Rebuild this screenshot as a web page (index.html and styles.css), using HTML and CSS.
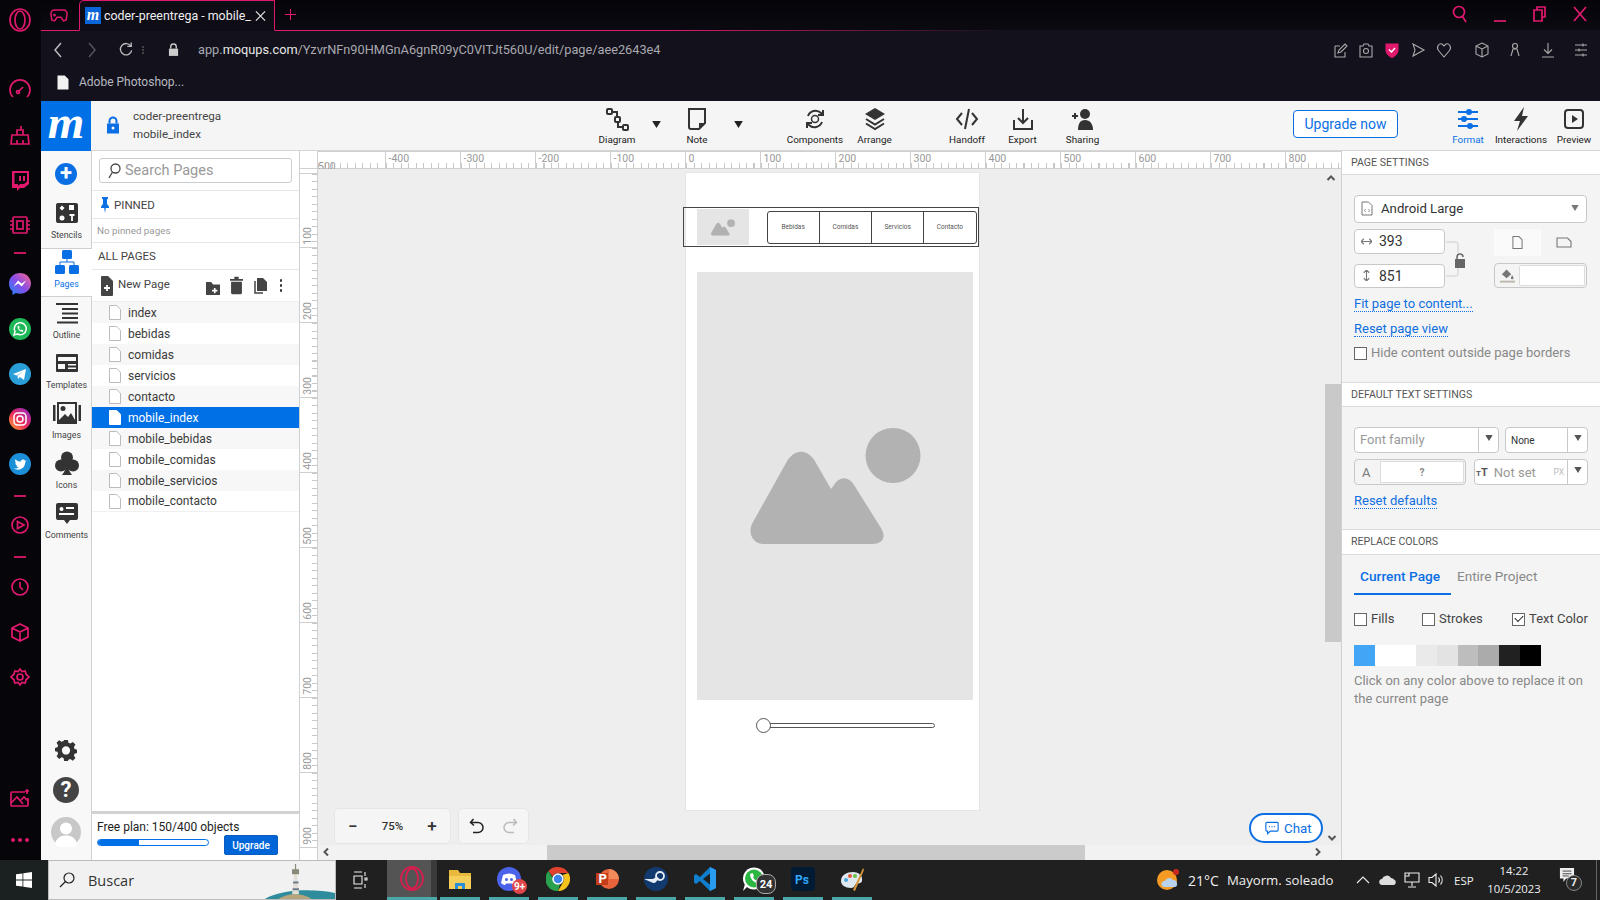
FILE: index.html
```html
<!DOCTYPE html>
<html lang="es">
<head>
<meta charset="utf-8">
<title>coder-preentrega - mobile_index</title>
<link rel="stylesheet" href="styles.css">
</head>
<body>
<svg class="sprite" width="0" height="0">
  <symbol id="file" viewBox="0 0 12 15"><path d="M.5.5h7.2l3.8 3.8v10.2H.5z"/></symbol>
  <symbol id="mount" viewBox="0 0 171 116"><circle cx="143" cy="27.500" r="27.500"/><path d="M14 116C2 116-3 104 3 94L36 35c8-15 22-15 30 0l15 26 3-4c5-9 15-9 20 0l27 43c6 10 1 16-9 16z"/></symbol>
  <symbol id="chev" viewBox="0 0 10 10"><path d="M1.500 7 5 3.500 8.500 7" fill="none" stroke="currentColor" stroke-width="2"/></symbol>
  <symbol id="caret" viewBox="0 0 10 8"><path d="M0 0h10L5 8z"/></symbol>
</svg>
<div class="screen">
  <div class="top">
    <nav class="opera-side">
      <svg class="side-icon first" viewBox="0 0 24 24"><ellipse cx="12" cy="12" rx="10" ry="11" class="p"/><ellipse cx="12" cy="12" rx="5" ry="9" class="p"/></svg>
      <div class="side-group g1">
        <svg class="side-icon" viewBox="0 0 24 24"><path class="p" d="M5 19a10 10 0 1 1 14 0"/><path class="p" d="M10 14l5-5"/><circle cx="10" cy="14" r="1.500" class="p"/></svg>
        <svg class="side-icon" viewBox="0 0 24 24"><path class="p" d="M4 12h16l1 9H3zM9 12V7h6v5M13 7V3M9 21v-4M15 21v-4"/></svg>
        <svg class="side-icon" viewBox="0 0 24 24"><path class="f" fill-rule="evenodd" d="M4 3h17v13l-5 4h-4l-3 3v-3H4zM6.500 5v11H10v2l2-2h4l3-2.500V5zM11 8h2v5h-2zM15 8h2v5h-2z"/></svg>
        <svg class="side-icon" viewBox="0 0 24 24"><rect x="5" y="4" width="14" height="16" rx="1" class="p"/><rect x="9" y="8" width="6" height="8" class="p"/><path class="p" d="M2 8h3M2 12h3M2 16h3M19 8h3M19 12h3M19 16h3"/></svg>
      </div>
      <div class="side-dash d1"></div>
      <div class="side-group g2">
        <svg class="side-icon" viewBox="0 0 24 24"><defs><linearGradient id="ms" x1="0" y1="1" x2="1" y2="0"><stop offset="0" stop-color="#1a8cff"/><stop offset=".5" stop-color="#8a4be8"/><stop offset="1" stop-color="#ff6a8a"/></linearGradient></defs><path d="M12 1C5.800 1 1 5.500 1 11.500c0 3.200 1.300 5.900 3.500 7.800V23l3.400-1.900c1.300.4 2.700.6 4.100.6 6.200 0 11-4.500 11-10.200S18.200 1 12 1z" fill="url(#ms)"/><path d="M5.500 14.500 10 8.500l3.500 3 4.800-3-4.500 6-3.500-3z" fill="#fff"/></svg>
        <svg class="side-icon" viewBox="0 0 24 24"><circle cx="12" cy="12" r="11" fill="#1fb858"/><path d="M6 18l1-3.500a6 6 0 1 1 2.500 2.500z" fill="none" stroke="#fff" stroke-width="1.500"/><path d="M9.500 9.500c0 3 2 5 5 5.500l1-1.500-2-1-.8.700c-.8-.4-1.300-1-1.700-1.800l.7-.9-1-2z" fill="#fff"/></svg>
        <svg class="side-icon" viewBox="0 0 24 24"><circle cx="12" cy="12" r="11" fill="#2a9ed8"/><path d="M5 12l13-5-2 11-4-3-2 2-.5-3.500L16 9l-7.500 4.500z" fill="#fff"/></svg>
        <svg class="side-icon" viewBox="0 0 24 24"><defs><linearGradient id="ig" x1="0" y1="1" x2="1" y2="0"><stop offset="0" stop-color="#fdb22c"/><stop offset=".45" stop-color="#ee2a5a"/><stop offset="1" stop-color="#8a2bd0"/></linearGradient></defs><circle cx="12" cy="12" r="11" fill="url(#ig)"/><rect x="6" y="6" width="12" height="12" rx="3.500" fill="none" stroke="#fff" stroke-width="1.500"/><circle cx="12" cy="12" r="3" fill="none" stroke="#fff" stroke-width="1.500"/></svg>
        <svg class="side-icon" viewBox="0 0 24 24"><circle cx="12" cy="12" r="11" fill="#1b8fd8"/><path d="M5.500 16.500c5 2.800 11.500.5 11.800-6.500l1.200-1.500-1.500.3c-.8-1.800-4-1.800-4.500 1-2 0-3.700-1-5-2.500-.8 1.500-.3 3 .8 4l-1-.3c0 1.400 1 2.400 2.300 2.700h-1.200c.4 1 1.300 1.600 2.400 1.700-1 .8-3 1.300-4.800 1.100z" fill="#fff"/></svg>
      </div>
      <div class="side-dash d2"></div>
      <svg class="side-icon play" viewBox="0 0 24 24"><circle cx="12" cy="12" r="8" class="p"/><path class="p" d="M9.500 8.500 16 12l-6.500 3.500z"/></svg>
      <div class="side-dash d3"></div>
      <div class="side-group g3">
        <svg class="side-icon" viewBox="0 0 24 24"><circle cx="12" cy="12" r="8" class="p"/><path class="p" d="M12 7v5l3 3"/></svg>
        <svg class="side-icon" viewBox="0 0 24 24"><path class="p" d="M12 4l8 4v9l-8 4-8-4V8zM4 8l8 4 8-4M12 12v9"/></svg>
        <svg class="side-icon" viewBox="0 0 24 24"><circle cx="12" cy="12" r="3" class="p"/><path class="p" d="M12 4l2 2.500 3.200-.5.8 3.200L21 12l-3 2.800-.8 3.200-3.200-.5L12 20l-2-2.500-3.200.5L6 14.800 3 12l3-2.800.8-3.200 3.200.5z"/></svg>
      </div>
      <div class="side-group bottom">
        <svg class="side-icon" viewBox="0 0 24 24"><path class="p" d="M17 6H4a1 1 0 0 0-1 1v12a1 1 0 0 0 1 1h15a1 1 0 0 0 1-1V12"/><path class="p" d="M3 17l6-6 6 7M13 14l3-3 4 4"/><path class="p" d="M19 3v5M17 5h4"/></svg>
        <div class="side-dots"><i></i><i></i><i></i></div>
      </div>
    </nav>
    <div class="main">
      <div class="tabbar">
        <svg class="gx" viewBox="0 0 20 16"><path class="p" d="M5 2h10a4 4 0 0 1 4 4l-1 7-3 1-3-4H8l-3 4-3-1-1-7a4 4 0 0 1 4-4z"/><path class="p" d="M5 6v3M3.500 7.500h3M14 6.500h.01M15.500 8h.01"/></svg>
        <div class="tab">
          <span class="favicon">m</span>
          <span class="tab-title">coder-preentrega - mobile_</span>
          <svg class="tab-x" viewBox="0 0 12 12"><path d="M1 1l10 10M11 1 1 11"/></svg>
        </div>
        <svg class="newtab" viewBox="0 0 12 12"><path d="M6 0v12M0 6h12"/></svg>
        <div class="winctl">
          <svg class="w-search" viewBox="0 0 16 18"><circle cx="7" cy="7" r="5.500" class="p"/><path class="p" d="M10.500 11.500 14 17"/></svg>
          <svg class="w-min" viewBox="0 0 14 18"><path class="p" d="M1 16h12"/></svg>
          <svg class="w-max" viewBox="0 0 14 18"><path class="p" d="M1 5h8v11H1zM4 5V2h8v10H9"/></svg>
          <svg class="w-close" viewBox="0 0 14 18"><path class="p" d="M1 2l12 14M13 2 1 16"/></svg>
        </div>
      </div>
      <div class="addressbar">
        <svg class="nav-ic back" viewBox="0 0 10 16"><path d="M8 1 2 8l6 7"/></svg>
        <svg class="nav-ic fwd" viewBox="0 0 10 16"><path d="M2 1l6 7-6 7"/></svg>
        <svg class="nav-ic reload" viewBox="0 0 16 16"><path d="M13.500 4A6.500 6.500 0 1 0 14.500 9M14 0v4.500H9.500"/></svg>
        <span class="addr-dots"></span>
        <svg class="addr-lock" viewBox="0 0 12 14"><path d="M1 6h10v8H1z"/><path class="lockbow" d="M3 6V4a3 3 0 0 1 6 0v2"/></svg>
        <div class="url"><span class="url-dim">app.</span><span class="url-host">moqups.com</span><span class="url-dim">/YzvrNFn90HMGnA6gnR09yC0VITJt560U/edit/page/aee2643e4</span></div>
        <div class="addr-right">
          <svg class="addr-ic" viewBox="0 0 16 16"><path d="M3 4h5M3 4v11h10v-5M6 11l1-3 6-6 2 2-6 6z"/></svg>
          <svg class="addr-ic" viewBox="0 0 16 16"><path d="M2 4h3l1-2h4l1 2h3v11H2z"/><circle cx="8" cy="9" r="2.500"/></svg>
          <svg class="addr-ic" viewBox="0 0 16 16"><path class="shield" d="M2 2h12v6c0 4-3 6-6 7.500C5 14 2 12 2 8z"/><path class="tick" d="M5 7.500l2.500 2.500L11 6"/></svg>
          <svg class="addr-ic" viewBox="0 0 16 16"><path d="M3 2l11 6-11 6 2-6z"/></svg>
          <svg class="addr-ic" viewBox="0 0 16 16"><path d="M8 15 2.500 8.500C0 5 3 1 6 2l2 2 2-2c3-1 6 3 3.500 6.500z"/></svg>
          <svg class="addr-ic gap" viewBox="0 0 16 16"><path d="M8 1l6 3v8l-6 3-6-3V4zM2 4l6 3 6-3M8 7v8"/></svg>
          <svg class="addr-ic far" viewBox="0 0 16 16"><circle cx="8" cy="4" r="2.500"/><path d="M4 14l2-7h4l2 7"/></svg>
          <svg class="addr-ic far" viewBox="0 0 16 16"><path d="M8 1v10M4 7.500 8 11.500l4-4M2 15h12"/></svg>
          <svg class="addr-ic far" viewBox="0 0 16 16"><path d="M2 3h12M2 8h12M2 13h12M10 1.500v3M6 6.500v3M10 11.500v3"/></svg>
        </div>
      </div>
      <div class="bookmarks">
        <svg class="bm-ic" viewBox="0 0 12 15"><use href="#file"/></svg>
        <span class="bm-text">Adobe Photoshop...</span>
      </div>
      <div class="app">
        <header class="toolbar">
          <div class="logo">m</div>
          <svg class="proj-lock" viewBox="0 0 14 17"><path d="M1 7h12v10H1z"/><path class="bow" d="M3.500 7V4.500a3.500 3.500 0 0 1 7 0V7"/><circle class="hole" cx="7" cy="11.500" r="1.500"/></svg>
          <div class="proj"><div>coder-preentrega</div><div>mobile_index</div></div>
          <div class="tools t-one">
            <div class="tool w-diagram"><svg viewBox="0 0 24 24"><rect class="thick" x="2" y="2" width="5" height="5" rx="1"/><rect class="thick" x="10" y="10" width="5" height="5" rx="1"/><rect class="thick" x="18" y="18" width="5" height="5" rx="1"/><path class="thick" d="M7 5h5v5M13 15v5h5"/></svg><span>Diagram</span></div>
            <svg class="tool-caret c1" viewBox="0 0 10 8"><use href="#caret"/></svg>
            <div class="tool w-note"><svg viewBox="0 0 24 24"><path class="thick" d="M4 2h16v14l-6 6H6a2 2 0 0 1-2-2z"/><path class="solid" d="M14 22v-6h6z"/></svg><span>Note</span></div>
            <svg class="tool-caret c2" viewBox="0 0 10 8"><use href="#caret"/></svg>
          </div>
          <div class="tools t-two">
            <div class="tool w-comp"><svg viewBox="0 0 24 24"><circle cx="12" cy="12" r="3.500"/><path class="thick" d="M5 9a8 8 0 0 1 13-3l2 2M19 15a8 8 0 0 1-13 3l-2-2M20 3v5h-5M4 21v-5h5"/></svg><span>Components</span></div>
            <div class="tool w-arr"><svg viewBox="0 0 24 24"><path class="solid" d="M12 1l10 6-10 6L2 7z"/><path class="thick" d="M3 12l9 5.500L21 12M3 16.500l9 5.500 9-5.500"/></svg><span>Arrange</span></div>
          </div>
          <div class="tools t-three">
            <div class="tool w-hand"><svg viewBox="0 0 24 24"><path class="thick" d="M7 6l-5 6 5 6M17 6l5 6-5 6M14 2l-4 20"/></svg><span>Handoff</span></div>
            <div class="tool w-exp"><svg viewBox="0 0 24 24"><path class="thick" d="M12 2v14M7 11l5 5 5-5M3 13v9h18v-9"/></svg><span>Export</span></div>
            <div class="tool w-share"><svg viewBox="0 0 24 24"><circle class="solid" cx="14" cy="7" r="5"/><path class="solid" d="M7 23c0-6 2-10 7-10s8 4 8 10z"/><path class="thick" d="M1 9h6M4 6v6"/></svg><span>Sharing</span></div>
          </div>
          <button class="upgrade-now">Upgrade now</button>
          <div class="tools t-four">
            <div class="tool w-fmt active"><svg viewBox="0 0 24 24"><path class="thick" d="M2 5h20M2 12h20M2 19h20"/><circle class="bluefill" cx="13" cy="5" r="3"/><circle class="bluefill" cx="8" cy="12" r="3"/><circle class="bluefill" cx="14" cy="19" r="3"/></svg><span>Format</span></div>
            <div class="tool w-int"><svg viewBox="0 0 24 24"><path class="solid" d="M15 0 5 14h6l-3 10L19 9h-6z"/></svg><span>Interactions</span></div>
            <div class="tool w-prev"><svg viewBox="0 0 24 24"><rect class="thick" x="3" y="3" width="18" height="18" rx="3"/><path class="solid" d="M10 8l6 4-6 4z"/></svg><span>Preview</span></div>
          </div>
        </header>
        <div class="work">
          <aside class="rail">
            <div class="rail-top"><div class="plus">+</div></div>
            <div class="rail-item"><svg viewBox="0 0 24 24"><rect class="solid" x="1" y="2" width="22" height="20" rx="2"/><path class="white" d="M7 4.500 9.500 7 7 9.500 4.500 7zM14 4h5v5h-5z"/><circle class="white" cx="7" cy="17" r="2.500"/><path class="wline" d="M14.500 14h5M17 14v6"/></svg><span>Stencils</span></div>
            <div class="rail-item on"><svg viewBox="0 0 24 24"><rect class="bluefill" x="7" y="0" width="10" height="9" rx="1.500"/><rect class="bluefill" x="0" y="15" width="10" height="9" rx="1.500"/><rect class="bluefill" x="14" y="15" width="10" height="9" rx="1.500"/><path class="bluelin" d="M5 15v-3h14v3M12 9v3"/></svg><span>Pages</span></div>
            <div class="rail-item"><svg viewBox="0 0 24 24"><path class="thick" d="M1 3h22M7 8h16M7 12.500h16M7 17h16M2 21.500h21"/></svg><span>Outline</span></div>
            <div class="rail-item"><svg viewBox="0 0 24 24"><path class="solid" fill-rule="evenodd" d="M2 3h20a1 1 0 0 1 1 1v16a1 1 0 0 1-1 1H2a1 1 0 0 1-1-1V4a1 1 0 0 1 1-1zM3 6v4h18V6zM3 13v5h7v-5zM13 13v1.500h8V13zM13 16.500V18h8v-1.500z"/></svg><span>Templates</span></div>
            <div class="rail-item wide"><svg viewBox="0 0 28 24"><path class="solid" fill-rule="evenodd" d="M4 1h20v22H4zM6 3v16h16V3zM0 4h2.500v16H0zM25.500 4H28v16h-2.500z"/><circle class="solid" cx="10" cy="7.500" r="2.500"/><path class="solid" d="M6 19l6-6 3 3 3-4 4 7z"/></svg><span>Images</span></div>
            <div class="rail-item"><svg viewBox="0 0 24 24"><circle class="solid" cx="12" cy="6.500" r="6"/><circle class="solid" cx="6" cy="14.500" r="6"/><circle class="solid" cx="18" cy="14.500" r="6"/><path class="solid" d="M11 12h2c0 5 1 8 4 12H7c3-4 4-7 4-12z"/></svg><span>Icons</span></div>
            <div class="rail-item"><svg viewBox="0 0 24 24"><path class="solid" d="M3 2h18a2 2 0 0 1 2 2v13a2 2 0 0 1-2 2h-6l-3 4-3-4H3a2 2 0 0 1-2-2V4a2 2 0 0 1 2-2z"/><circle class="white" cx="6.500" cy="8" r="2"/><path class="wline" d="M11 7h8M4 13h15"/></svg><span>Comments</span></div>
            <div class="rail-bottom">
              <svg class="gear" viewBox="0 0 24 24"><path class="solid" fill-rule="evenodd" d="M10 1h4l.7 3.200 2 .8 2.800-1.700 2.800 2.800L20.600 9l.8 2 2.600.7v3.600l-2.600.7-.8 2 1.700 2.800-2.800 2.800-2.800-1.700-2 .8L14 24h-4l-.7-3.200-2-.8-2.800 1.700-2.800-2.800L3.400 16l-.8-2L0 13.300V9.700L2.600 9l.8-2L1.700 4.100l2.800-2.800L7.300 3l2-.8zM12 8a4.500 4.500 0 1 0 0 9 4.500 4.500 0 0 0 0-9z"/></svg>
              <div class="help">?</div>
              <svg class="avatar" viewBox="0 0 30 30"><circle cx="15" cy="15" r="15" class="av-bg"/><circle cx="15" cy="11.500" r="6" class="white"/><path class="white" d="M4 27c1-6 6-8.500 11-8.500S25 21 26 27a15 15 0 0 1-22 0z"/></svg>
            </div>
          </aside>
          <section class="pages">
            <div class="search-wrap">
              <div class="search">
                <svg viewBox="0 0 14 16"><circle cx="8.500" cy="5.500" r="4.500"/><path d="M5.500 9 2 15"/></svg>
                <span>Search Pages</span>
              </div>
            </div>
            <div class="pg-head h-pin"><svg viewBox="0 0 10 16"><path d="M2 0h6v1.500L7 2.500V7l2 2.500V11H5.800L5 16l-.8-5H1V9.500L3 7V2.500L2 1.500z"/></svg>PINNED</div>
            <div class="pg-empty">No pinned pages</div>
            <div class="pg-head h-all">ALL PAGES</div>
            <div class="pg-actions">
              <svg class="np-ic" viewBox="0 0 13 20"><path d="M1 1a1 1 0 0 1 1-1h6l5 5v14a1 1 0 0 1-1 1H2a1 1 0 0 1-1-1z"/><path class="wline" d="M7 9v6M4 12h6"/></svg>
              <span class="np-text">New Page</span>
              <svg class="act a-folder" viewBox="0 0 16 16"><path d="M0 1h6l2 3h8v12H0z"/><path class="wline" d="M10 8v6M7 11h6"/></svg>
              <svg class="act a-trash" viewBox="0 0 12 16"><path d="M0 2h12v1.500H0zM4 0h4v2H4zM1 4.500h10V15a1 1 0 0 1-1 1H2a1 1 0 0 1-1-1z"/></svg>
              <svg class="act a-copy" viewBox="0 0 14 16"><path d="M4 0h6l4 4v9H4z"/><path class="copyline" d="M2 3v12h8"/></svg>
              <span class="kebab"><i></i><i></i><i></i></span>
            </div>
            <ul class="pg-list">
              <li><svg viewBox="0 0 12 15"><use href="#file"/></svg>index</li>
              <li><svg viewBox="0 0 12 15"><use href="#file"/></svg>bebidas</li>
              <li><svg viewBox="0 0 12 15"><use href="#file"/></svg>comidas</li>
              <li><svg viewBox="0 0 12 15"><use href="#file"/></svg>servicios</li>
              <li><svg viewBox="0 0 12 15"><use href="#file"/></svg>contacto</li>
              <li class="sel"><svg viewBox="0 0 12 15"><use href="#file"/></svg>mobile_index</li>
              <li><svg viewBox="0 0 12 15"><use href="#file"/></svg>mobile_bebidas</li>
              <li><svg viewBox="0 0 12 15"><use href="#file"/></svg>mobile_comidas</li>
              <li><svg viewBox="0 0 12 15"><use href="#file"/></svg>mobile_servicios</li>
              <li><svg viewBox="0 0 12 15"><use href="#file"/></svg>mobile_contacto</li>
            </ul>
            <div class="plan">
              <div class="plan-text">Free plan: 150/400 objects</div>
              <div class="plan-row">
                <div class="plan-bar"><div class="plan-fill" style="width:37.500%"></div></div>
                <button class="plan-btn">Upgrade</button>
              </div>
            </div>
          </section>
          <section class="center">
            <div class="corner"></div>
            <div class="hruler">
              <div class="hcell first">500</div><div class="hcell">-400</div><div class="hcell">-300</div><div class="hcell">-200</div><div class="hcell">-100</div><div class="hcell">0</div><div class="hcell">100</div><div class="hcell">200</div><div class="hcell">300</div><div class="hcell">400</div><div class="hcell">500</div><div class="hcell">600</div><div class="hcell">700</div><div class="hcell">800</div>
            </div>
            <div class="vruler">
              <div class="vcell"><span>100</span></div><div class="vcell"><span>200</span></div><div class="vcell"><span>300</span></div><div class="vcell"><span>400</span></div><div class="vcell"><span>500</span></div><div class="vcell"><span>600</span></div><div class="vcell"><span>700</span></div><div class="vcell"><span>800</span></div><div class="vcell"><span>900</span></div>
            </div>
            <div class="canvas">
              <div class="artboard"></div>
              <div class="w-header">
                <div class="w-thumb"><svg viewBox="0 0 171 116"><use href="#mount"/></svg></div>
                <div class="w-nav"><div>Bebidas</div><div>Comidas</div><div>Servicios</div><div>Contacto</div></div>
              </div>
              <div class="w-image"><svg viewBox="0 0 171 116"><use href="#mount"/></svg></div>
              <div class="w-slider"><div class="w-thumbdot"></div></div>
              <div class="zoombox"><span class="zb">−</span><span class="zv">75%</span><span class="zb">+</span></div>
              <div class="undobox">
                <svg viewBox="0 0 16 16"><path d="M4.500 1 1.500 4.500l3.500 3M2 4.500h7a4.500 4.500 0 0 1 0 10H4"/></svg>
                <svg class="redo" viewBox="0 0 16 16"><path d="M11.500 1l3 3.500-3.500 3M14 4.500H7a4.500 4.500 0 0 0 0 10h5"/></svg>
              </div>
              <div class="chat"><svg viewBox="0 0 16 16"><path d="M2 1.500h12a1 1 0 0 1 1 1v8a1 1 0 0 1-1 1H6l-3 3v-3H2a1 1 0 0 1-1-1v-8a1 1 0 0 1 1-1z"/><path class="chatdots" d="M4.500 6.500h1M7.500 6.500h1M10.500 6.500h1"/></svg>Chat</div>
              <div class="vscroll"><div class="vthumb"></div></div>
              <div class="hscroll"><div class="hthumb"></div></div>
              <svg class="chev c-up" viewBox="0 0 10 10"><use href="#chev"/></svg>
              <svg class="chev c-down" viewBox="0 0 10 10"><use href="#chev"/></svg>
              <svg class="chev c-left" viewBox="0 0 10 10"><use href="#chev"/></svg>
              <svg class="chev c-right" viewBox="0 0 10 10"><use href="#chev"/></svg>
            </div>
          </section>
          <aside class="props">
            <div class="p-head first-head">PAGE SETTINGS</div>
            <div class="p-body b-page">
              <div class="field f-select">
                <svg class="ds-ic" viewBox="0 0 12 15"><path d="M1 1h6.500L11 4.500V14H1z"/><path class="mini" d="M4.500 8 3.500 9.500l1 1.500M7.500 8l1 1.500-1 1.500"/></svg>
                <span>Android Large</span>
                <svg class="tri" viewBox="0 0 10 8"><use href="#caret"/></svg>
              </div>
              <div class="dims">
                <div class="dim-col">
                  <div class="field f-num"><svg viewBox="0 0 12 8"><path d="M0 4h12M3 1 0 4l3 3M9 1l3 3-3 3"/></svg><span>393</span></div>
                  <div class="field f-num"><svg viewBox="0 0 12 12"><path d="M6 0v12M3 3l3-3 3 3M3 9l3 3 3-3"/></svg><span>851</span></div>
                </div>
                <svg class="dim-lock" viewBox="0 0 49 59"><path class="br" d="M1 13h10a2 2 0 0 1 2 2v9M1 47h10a2 2 0 0 0 2-2v-6"/><path class="lk" d="M10 30h10v9H10z"/><path class="br2" d="M12 30v-2a3 3 0 0 1 6 0"/></svg>
                <div class="dim-right">
                  <div class="orient">
                    <div class="o-btn on"><svg viewBox="0 0 12 15"><path d="M1 1h6.500L11 4.500V14H1z"/></svg></div>
                    <div class="o-btn"><svg class="land" viewBox="0 0 16 11"><path d="M1 1h10.500L15 4.500V10H1z"/></svg></div>
                  </div>
                  <div class="fill-box">
                    <svg viewBox="0 0 16 16"><path d="M7 1l5 5-5 4.500L2 6z"/><path d="M13 7l1.500 3a1.500 1.500 0 0 1-3 0z"/><rect class="barfill" x="0" y="13" width="16" height="2"/></svg>
                    <div class="fill-swatch"></div>
                  </div>
                </div>
              </div>
              <a class="lnk l1">Fit page to content...</a>
              <a class="lnk l2">Reset page view</a>
              <label class="chk c-hide"><i class="cb"></i>Hide content outside page borders</label>
            </div>
            <div class="p-head">DEFAULT TEXT SETTINGS</div>
            <div class="p-body b-text">
              <div class="txt-row">
                <div class="field f-font"><span class="ph">Font family</span><b class="drop"><svg viewBox="0 0 10 8"><use href="#caret"/></svg></b></div>
                <div class="field f-none"><span class="none-t">None</span><b class="drop"><svg viewBox="0 0 10 8"><use href="#caret"/></svg></b></div>
              </div>
              <div class="txt-row">
                <div class="field f-a"><span class="a-l">A</span><div class="a-sw">?</div></div>
                <div class="field f-set"><span class="tt"><small>T</small>T</span><span class="ph">Not set</span><em>PX</em><b class="drop"><svg viewBox="0 0 10 8"><use href="#caret"/></svg></b></div>
              </div>
              <a class="lnk l3">Reset defaults</a>
            </div>
            <div class="p-head h-colors">REPLACE COLORS</div>
            <div class="p-body b-colors">
              <div class="ctabs"><span class="ctab on">Current Page</span><span class="ctab">Entire Project</span></div>
              <div class="chk-row">
                <label class="chk c-fills"><i class="cb"></i>Fills</label>
                <label class="chk c-strokes"><i class="cb"></i>Strokes</label>
                <label class="chk"><i class="cb ck"></i>Text Color</label>
              </div>
              <div class="swatches"><i class="s1"></i><i class="s2"></i><i class="s3"></i><i class="s4"></i><i class="s5"></i><i class="s6"></i><i class="s7"></i><i class="s8"></i></div>
              <p class="hint">Click on any color above to replace it on the current page</p>
            </div>
          </aside>
        </div>
      </div>
    </div>
  </div>
  <footer class="taskbar">
    <div class="start"><svg viewBox="0 0 16 16"><path d="M0 2.300 6.500 1.400v6.200H0zM7.300 1.300 16 0v7.600H7.300zM0 8.400h6.500v6.200L0 13.700zM7.300 8.400H16V16l-8.700-1.300z"/></svg></div>
    <div class="tsearch">
      <svg viewBox="0 0 16 16"><circle cx="10" cy="6" r="5"/><path d="M6.500 9.500 1 15"/></svg>
      <span>Buscar</span>
      <svg class="light" viewBox="0 0 80 40"><path d="M4 40c10-8 30-11 46-11 12 0 22 1 30 3v8z" fill="#2f8c9c"/><path d="M18 40c6-5 12-7 20-7s15 3 20 7z" fill="#b8a47c"/><path d="M35 33l2-21h3l2 21z" fill="#e2dfd6"/><path d="M35.500 12h6v-4h-6zM38.500 8V2" fill="#8a8a78" stroke="#8a8a78"/><path d="M36 20h5.500v2H36zM35.500 27H42v2h-6.500z" fill="#6d7a8a"/></svg>
    </div>
    <div class="taskview"><svg viewBox="0 0 18 18"><path d="M3 1h8M3 5h8v8H3zM3 17h8M14 1v4M14 7h2v2h-2zM14 13v4"/></svg></div>
    <div class="task-opera"><svg viewBox="0 0 24 24"><ellipse cx="12" cy="12" rx="11" ry="11.500"/><ellipse cx="12" cy="12" rx="6" ry="10"/></svg></div>
    <div class="apps">
      <div class="app-t"><svg viewBox="0 0 24 24"><path d="M1 3h9l2 3h11v16H1z" fill="#e8b93a"/><path d="M1 9h22v13H1z" fill="#f5cf5a"/><path d="M7 16h10v6h-3v-3h-4v3H7z" fill="#2a8fd8"/></svg></div>
      <div class="app-t badge-wrap"><svg viewBox="0 0 24 24"><circle cx="12" cy="12" r="12" fill="#4a63e8"/><path d="M6 8c4-2 8-2 12 0l2 8c-2 1.500-3 2-4 2l-1-1.500h-6L8 18c-1 0-2-.5-4-2z" fill="#fff"/><circle cx="9.500" cy="12.500" r="1.500" fill="#4a63e8"/><circle cx="14.500" cy="12.500" r="1.500" fill="#4a63e8"/></svg><span class="badge red">9+</span></div>
      <div class="app-t"><svg viewBox="0 0 24 24"><path d="M12 0a12 12 0 0 1 10.400 6H12a6 6 0 0 0-5.500 3.500L2.500 4A12 12 0 0 1 12 0z" fill="#e3412f"/><path d="M22.400 6A12 12 0 0 1 12 24l5.200-9A6 6 0 0 0 16.500 8z" fill="#f6c21c"/><path d="M12 24A12 12 0 0 1 2.500 4l5 8.500a6 6 0 0 0 6.500 5.200z" fill="#2aa14f"/><circle cx="12" cy="12" r="5" fill="#3d83ee" stroke="#fff" stroke-width="1.500"/></svg></div>
      <div class="app-t"><svg viewBox="0 0 24 24"><circle cx="14" cy="12" r="10" fill="#e8643c"/><path d="M14 2a10 10 0 0 1 10 10H14z" fill="#f28b5c"/><path d="M1 6h12v12H1z" fill="#c43e1c"/><text x="3.500" y="16" class="ppt-t">P</text></svg></div>
      <div class="app-t"><svg viewBox="0 0 24 24"><circle cx="12" cy="12" r="12" fill="#123a6e"/><circle cx="16" cy="9" r="4" fill="none" stroke="#e8eef6" stroke-width="1.800"/><path d="M0 12l8 3.500a3.500 3.500 0 0 0 5-2l3-1-3-3-4 2.500z" fill="#e8eef6"/></svg></div>
      <div class="app-t"><svg viewBox="0 0 24 24"><path d="M17 0l6 3v18l-6 3L7 14l-4 3-2-1.500V8.500L3 7l4 3z" fill="#0f7fd0"/><path d="M17 6.500v11L10 12z" fill="#1f1f1f"/><path d="M17 0l6 3v18l-6 3z" fill="#2a9cf0"/></svg></div>
      <div class="app-t badge-wrap"><svg viewBox="0 0 24 24"><circle cx="12" cy="11.500" r="11" fill="#fff"/><path d="M1 24l2-7h5z" fill="#fff"/><circle cx="12" cy="11.500" r="9" fill="#2bb741"/><path d="M8 7c0 5 4 9 9 9.500l1.500-2.500-3-1.500-1 1c-1.500-.5-3-2-3.500-3.500l1-1-1.500-3z" fill="#fff"/></svg><span class="badge dark">24</span></div>
      <div class="app-t"><svg viewBox="0 0 24 24"><rect width="24" height="24" rx="4" fill="#001b33"/><text x="4" y="17" class="ps-t">Ps</text></svg></div>
      <div class="app-t"><svg viewBox="0 0 24 24"><path d="M1 14C1 8 7 5 13 5s10 4 9 9c-1 3-4 2-6 3-2 1-1 4-5 4-6 0-10-3-10-7z" fill="#dfe8ef"/><circle cx="6" cy="13" r="2" fill="#4aa3e0"/><circle cx="10" cy="9" r="2" fill="#e05a3a"/><circle cx="15" cy="9" r="2" fill="#6cbf4a"/><path d="M23 1l1 2-9 21-2-1z" fill="#d8963a"/></svg></div>
    </div>
    <div class="tray">
      <svg class="weather" viewBox="0 0 22 22"><circle cx="10" cy="11" r="10" fill="#f59a23"/><circle cx="19" cy="3" r="3" fill="#c8281e"/><path d="M7 18a3 3 0 0 1 1-6 4.500 4.500 0 0 1 8-1 3.500 3.500 0 0 1 4 3.500 3 3 0 0 1-2 3.500z" fill="#b9d3ee"/></svg>
      <span class="temp">21°C</span>
      <span class="cond">Mayorm. soleado</span>
      <svg class="tray-ic t-up" viewBox="0 0 14 14"><path d="M1 10l6-6 6 6"/></svg>
      <svg class="tray-ic t-cloud" viewBox="0 0 18 12"><path class="cloud" d="M3.500 11a3 3 0 0 1-.5-6 5 5 0 0 1 9-1 3.500 3.500 0 0 1 3 1.500A3 3 0 0 1 15 11z"/></svg>
      <svg class="tray-ic t-net" viewBox="0 0 16 16"><path d="M1 1h14v9H1zM8 10v4M4 15h8M1 4h4V1"/></svg>
      <svg class="tray-ic t-vol" viewBox="0 0 16 16"><path d="M1 5.500h3L8 2v12l-4-3.500H1zM10.500 5.500a4 4 0 0 1 0 5M12.500 3.500a7 7 0 0 1 0 9"/></svg>
      <span class="esp">ESP</span>
      <div class="clock"><div>14:22</div><div>10/5/2023</div></div>
      <div class="notif"><svg viewBox="0 0 18 17"><path d="M1 0h16v12H8l-3 4v-4H1z"/><path class="nl" d="M4 3.500h10M4 6.500h10M4 9h7"/></svg><span>7</span></div>
      <div class="showdesk"></div>
    </div>
  </footer>
</div>
</body>
</html>
```
FILE: styles.css
```css
*{box-sizing:border-box}
html,body{margin:0;padding:0;height:900px;overflow:hidden}
body{font-family:Roboto,"Liberation Sans",sans-serif;color:#333;background:#000}
.sprite{position:absolute}
svg{display:block;flex:none}
.screen{display:grid;grid-template-rows:860px 40px;width:1600px;height:900px}
.top{display:flex;min-height:0}

/* Opera sidebar */
.opera-side{width:41px;flex:none;background:#060509;display:flex;flex-direction:column;align-items:center;padding:0 2px 8px 0}
.side-icon{width:24px;height:24px}
.p{fill:none;stroke:#e0196e;stroke-width:1.700}
.f{fill:#e0196e}
.side-group{display:flex;flex-direction:column;align-items:center;gap:21px}
.first{margin-top:8px}
.g1{margin-top:46px}
.d1{margin-top:15px}
.g2{margin-top:18px}
.d2{margin-top:19px}
.play{margin-top:16px}
.d3{margin-top:19px}
.g3{margin-top:17px}
.bottom{margin-top:auto;gap:18px}
.side-dash{width:12px;height:2px;background:#c8155f;flex:none}
.side-dots{display:flex;gap:3px;height:24px;align-items:center}
.side-dots i{width:4px;height:4px;border-radius:50%;background:#e0196e}

/* Browser chrome */
.main{flex:1;min-width:0;display:flex;flex-direction:column}
.tabbar{height:31px;flex:none;display:flex;align-items:flex-start;background:linear-gradient(#050409,#0b0a11);border-bottom:1px solid;border-image:linear-gradient(90deg,#e0196e 0,#e0196e 40%,#12111c 62%) 1}
.gx{width:18px;height:15px;margin:8px 0 0 9px}
.tab{width:196px;height:31px;margin-left:11px;display:flex;align-items:center;background:#0e0d16;border:1px solid #e0196e;border-bottom-color:#0e0d16;border-radius:5px 0 0 0;padding:0 0 0 5px;position:relative;z-index:1}
.favicon{width:16px;height:17px;background:#0a66d8;color:#fff;font:italic bold 16px/15px "Liberation Serif",serif;text-align:center;flex:none}
.tab-title{margin-left:3px;color:#eee;font-size:12.400px;white-space:nowrap;width:146px;flex:none}
.tab-x{width:11px;height:12px;margin-left:5px;fill:none;stroke:#e4e4e4;stroke-width:1.300}
.newtab{width:11px;height:11px;margin:9px 0 0 10px;stroke:#e0196e;stroke-width:1.200;fill:none}
.winctl{margin-left:auto;display:flex;align-items:flex-start;padding-top:5px}
.w-search{width:16px;height:18px;margin-right:25px}
.w-min{width:14px;height:18px;margin-right:26px}
.w-max{width:14px;height:18px;margin-right:26px}
.w-close{width:14px;height:18px;margin-right:13px}
.addressbar{height:37px;flex:none;background:#12111c;display:flex;align-items:center}
.nav-ic{fill:none;stroke:#bbb;stroke-width:1.500}
.back{width:10px;height:16px;margin-left:12px}
.fwd{width:10px;height:16px;margin-left:24px;stroke:#55545e}
.reload{width:14px;height:15px;margin-left:22px}
.addr-dots{width:2px;height:8px;margin-left:9px;background:repeating-linear-gradient(#444 0 2px,transparent 2px 3px)}
.addr-lock{width:11px;height:13px;margin-left:24px;fill:#ccc}
.lockbow{fill:none;stroke:#ccc;stroke-width:1.500}
.url{margin-left:19px;font-size:12.750px;white-space:nowrap;color:#a9a9af}
.url-host{color:#e8e8e8}
.addr-right{margin-left:auto;display:flex;align-items:center;gap:10px;padding-right:11px}
.addr-ic{width:16px;height:16px;fill:none;stroke:#aaa;stroke-width:1.100}
.addr-ic.gap{margin-left:12px}
.addr-ic.far{margin-left:7px}
.shield{fill:#e0196e;stroke:#e0196e}
.tick{stroke:#fff;stroke-width:1.500}
.bookmarks{height:33px;flex:none;background:#12111c;display:flex;align-items:flex-start;padding:7px 0 0 16px}
.bm-ic{width:12px;height:15px;fill:#f2f2f2}
.bm-text{margin-left:10px;color:#b9b9c0;font-size:12px;line-height:15px}

/* App */
.app{flex:1;min-height:0;display:flex;flex-direction:column;background:#fff}
.toolbar{height:50px;flex:none;background:#f5f5f5;border-bottom:1px solid #d5d5d5;display:flex;align-items:flex-start}
.logo{width:50px;height:50px;background:#0070e6;color:#fff;font:italic bold 47px/42px "Liberation Serif",serif;text-align:center;flex:none}
.proj-lock{width:14px;height:18px;margin:15px 0 0 15px;fill:#0a6fe4}
.bow{fill:none;stroke:#0a6fe4;stroke-width:2}
.hole{fill:#fff}
.proj{margin-left:13px;font-size:11.600px;line-height:18px;color:#444;padding-top:6px;width:456px;flex:none}
.tools{display:flex;align-items:flex-start}
.t-one{width:197.500px;flex:none}
.t-two{width:157.500px;flex:none;gap:7px}
.t-three{width:161px;flex:none}
.tool{display:flex;flex-direction:column;align-items:center;flex:none;font-size:9.900px;color:#222;padding-top:6px;white-space:nowrap}
.tool svg{width:24px;height:24px;fill:none;stroke:#333;stroke-width:1.500}
.tool span{display:block;margin-top:2px;line-height:14px}
.thick{fill:none;stroke:#333;stroke-width:2}
.solid{fill:#333;stroke:none}
.white{fill:#fff;stroke:none}
.wline{fill:none;stroke:#fff;stroke-width:1.800}
.bluefill{fill:#0a6fe4;stroke:none}
.bluelin{fill:none;stroke:#0a6fe4;stroke-width:1}
.tool-caret{width:9px;height:7px;fill:#222;margin-top:20px}
.c1{margin-left:9px;margin-right:3px}
.c2{margin-left:18px}
.w-diagram{width:52px;margin-left:2px}
.w-note{width:38px;margin-left:14px}
.w-comp{width:57px}
.w-arr{width:48px}
.w-hand{width:46px}
.w-exp{width:40px;margin-left:12.500px}
.w-share{width:44px;margin-left:18px}
.upgrade-now{width:105px;height:28px;margin:9px 0 0 188px;background:#fff;border:1px solid #0a6fe4;border-radius:4px;color:#0a6fe4;font:14px Roboto,sans-serif;padding:0;flex:none}
.t-four{margin-left:50px}
.w-fmt{width:40px}
.w-int{width:56px;margin-left:5px}
.w-prev{width:40px;margin-left:5px}
.active{color:#0a6fe4}
.active .thick{stroke:#0a6fe4}

.work{flex:1;min-height:0;display:flex}

/* Rail */
.rail{width:51px;flex:none;background:#f8f8f8;border-right:1px solid #d0d0d0;display:flex;flex-direction:column;position:relative}
.rail-top{height:47px;flex:none;padding:12px 0 0 14px}
.plus{width:22px;height:22px;border-radius:50%;background:#0a6fe4;color:#fff;font:700 22px/20px Roboto,sans-serif;text-align:center}
.rail-item{height:50px;flex:none;display:flex;flex-direction:column;align-items:center;font-size:8.800px;color:#444;padding-top:2px;margin-right:-1px}
.rail-item svg{width:24px;height:24px;margin-top:1px}
.rail-item span{display:block;margin-top:4px;line-height:13px}
.rail-item.wide svg{width:28px}
.rail-item.on{background:#fff;color:#0a6fe4;border-top:1px solid #d0d0d0;border-bottom:1px solid #d0d0d0;height:49px;padding-top:0;margin-bottom:1px}
.rail-bottom{margin-top:auto;display:flex;flex-direction:column;align-items:center;padding-bottom:13px}
.gear{width:22px;height:22px}
.help{width:26px;height:26px;margin-top:16px;border-radius:50%;background:#444;color:#fff;font:700 22px/26px Roboto,sans-serif;text-align:center}
.avatar{width:30px;height:30px;margin-top:14px}
.av-bg{fill:#c8c8c8}

/* Pages panel */
.pages{width:207px;flex:none;background:#fff;display:flex;flex-direction:column}
.search-wrap{height:40px;flex:none;padding:7px 7px 0 7px;border-bottom:1px solid #e6e6e6}
.search{height:25px;border:1px solid #ccc;border-radius:3px;display:flex;align-items:center;padding-left:7px;color:#999;font-size:14.500px}
.search svg{width:14px;height:16px;fill:none;stroke:#444;stroke-width:1.300;margin-right:4px}
.pg-head{height:27px;flex:none;display:flex;align-items:center;font-size:11.500px;color:#444;border-bottom:1px solid #e6e6e6;padding-left:6px}
.h-pin{height:28px}
.h-pin svg{width:10px;height:16px;fill:#0a6fe4;margin:0 4px 0 2px}
.pg-empty{height:24px;flex:none;font-size:9.800px;color:#999;line-height:23px;padding-left:5px;border-bottom:1px solid #e6e6e6}
.pg-actions{height:32px;flex:none;display:flex;align-items:center;padding-left:8px;border-bottom:1px solid #eee}
.np-ic{width:13px;height:20px;fill:#444}
.np-text{margin-left:5px;font-size:11.500px;color:#444;padding-bottom:3px}
.act{fill:#444}
.a-folder{width:16px;height:14px;margin:5px 0 0 35px}
.a-trash{width:13px;height:19px;margin-left:9px}
.a-copy{width:14px;height:18px;margin-left:10px}
.copyline{fill:none;stroke:#444;stroke-width:1.500}
.kebab{display:flex;flex-direction:column;gap:2.500px;margin-left:13px}
.kebab i{width:2.500px;height:2.500px;background:#333;border-radius:50%}
.pg-list{list-style:none;margin:0;padding:0;flex:none}
.pg-list li{height:21px;display:flex;align-items:center;padding-left:17px;font-size:12px;color:#3a3a3a}
.pg-list li:nth-child(odd){background:#f7f7f7}
.pg-list li:last-child{border-bottom:1px solid #f0f0f0}
.pg-list svg{width:12px;height:15px;margin-right:7px;fill:#fff;stroke:#bbb;stroke-width:1}
.pg-list li.sel{background:#0070e6;color:#fff}
.pg-list li.sel svg{stroke:#fff}
.plan{margin-top:auto;height:49px;flex:none;border-top:3px solid #d2d2d2;padding:5px 0 0 5px}
.plan-text{font-size:12px;line-height:16px;color:#222}
.plan-row{display:flex;align-items:flex-start}
.plan-bar{width:112px;height:7px;margin-top:4px;border:1px solid #0070e6;border-radius:4px;background:#fff;overflow:hidden}
.plan-fill{height:100%;background:#0070e6}
.plan-btn{width:54px;height:20px;margin:0 0 0 15px;background:#0066d8;color:#fff;border:1px solid #0a5cc0;border-radius:2px;font:500 10px Roboto,sans-serif;padding:0}

/* Center */
.center{flex:1;min-width:0;display:grid;grid-template-columns:18px 1fr;grid-template-rows:18px 1fr;border-left:1px solid #d0d0d0}
.corner{background:#fff;border-bottom:1px solid #d0d0d0;border-right:1px solid #d0d0d0}
.hruler{display:flex;background:#fff;border-bottom:1px solid #d0d0d0;border-top:1px solid #d0d0d0}
.hcell{width:75px;flex:none;border-left:1px solid #cfcfcf;padding:0 0 0 3px;font-size:10.500px;line-height:13px;color:#999;background:repeating-linear-gradient(90deg,#c8c8c8 0 1px,transparent 1px 7.500px) 0 100%/100% 5px no-repeat}
.hcell.first{width:66.500px;border-left:0;padding-left:0;background-position:100% 100%}
.hcell:last-child{width:56.500px}
.vruler{background:#fff;border-right:1px solid #d0d0d0;overflow:hidden;padding-top:3.700px;min-height:0}
.vcell{height:75px;border-bottom:1px solid #cfcfcf;display:flex;align-items:flex-end;padding:0 0 2px 1px;font-size:10.500px;color:#999;background:repeating-linear-gradient(180deg,#c8c8c8 0 1px,transparent 1px 7.500px) 100% 0/5px 100% no-repeat}
.vcell:first-child{border-top:1px solid #cfcfcf}
.vcell span{writing-mode:vertical-rl;transform:rotate(180deg);line-height:13px}
.canvas{position:relative;background:#eee;overflow:hidden;min-height:0}
.artboard{position:absolute;left:367px;top:3px;width:295px;height:639px;background:#fff;border:1px solid #e4e4e4}
.w-header{position:absolute;left:365px;top:38px;width:296px;height:40px;border:1.500px solid #444;display:flex;align-items:center;padding-left:12.500px}
.w-thumb{width:52px;height:36px;background:#e5e5e5;display:flex;align-items:center;justify-content:center}
.w-thumb svg{width:24px;height:17px;fill:#b2b2b2}
.w-nav{margin-left:18px;width:210px;height:33px;border:1.500px solid #444;border-radius:3px;display:flex;background:#fff}
.w-nav div{flex:1;text-align:center;font-size:6.500px;line-height:30px;color:#555;border-left:1.500px solid #444}
.w-nav div:first-child{border-left:0}
.w-image{position:absolute;left:379px;top:103px;width:276px;height:428px;background:#e5e5e5;display:flex;align-items:center;justify-content:center}
.w-image svg{width:171px;height:116px;fill:#b2b2b2}
.w-slider{position:absolute;left:445px;top:554px;width:172px;height:5px;border:1.500px solid #555;border-radius:3px;background:#fff}
.w-thumbdot{position:absolute;left:-8px;top:-6px;width:15px;height:15px;border:1.500px solid #555;border-radius:50%;background:#fff}
.zoombox{position:absolute;left:16px;top:639px;width:117px;height:36px;background:#f5f5f5;border:1px solid #e6e6e6;border-radius:5px;display:flex;align-items:center;padding:0 12px}
.zb{width:12px;text-align:center;font-size:17px;font-weight:500;color:#333}
.zv{flex:1;text-align:center;font-size:11.500px;font-weight:500;color:#333}
.undobox{position:absolute;left:140px;top:639px;width:71px;height:36px;background:#f5f5f5;border:1px solid #e6e6e6;border-radius:5px;display:flex;align-items:center;justify-content:space-between;padding:0 10px 0 10px}
.undobox svg{width:16px;height:16px;fill:none;stroke:#222;stroke-width:1.500}
.undobox .redo{stroke:#bbb}
.chat{position:absolute;left:931px;top:644px;width:74px;height:30px;background:#fff;border:2px solid #0a6fe4;border-radius:15px;display:flex;align-items:center;padding-left:14px;color:#0a6fe4;font-size:13.300px}
.chat svg{width:14px;height:14px;margin-right:5px;fill:none;stroke:#0a6fe4;stroke-width:1.300}
.chatdots{stroke-width:1.500}
.vscroll{position:absolute;right:0;top:0;width:16px;height:676px}
.vthumb{width:16px;height:258px;margin-top:215px;background:#c9c9c9}
.hscroll{position:absolute;left:0;right:0;bottom:0;height:15px;background:#f2f2f2}
.hthumb{width:538px;height:15px;margin-left:229px;background:#cbcbcb}
.chev{position:absolute;width:10px;height:10px;color:#555}
.c-up{left:1008px;top:4px}
.c-down{left:1009px;top:664px;transform:rotate(180deg)}
.c-left{left:3px;top:678px;transform:rotate(-90deg)}
.c-right{left:995px;top:678px;transform:rotate(90deg)}

/* Properties */
.props{width:259px;flex:none;background:#f4f4f4;border-left:1px solid #d0d0d0;display:flex;flex-direction:column}
.p-head{height:25px;flex:none;background:#fff;border-top:1px solid #dcdcdc;border-bottom:1px solid #dcdcdc;padding-left:9px;font-size:10.600px;line-height:23px;color:#555}
.first-head{height:24px;border-top:0}
.p-body{padding:0 12px;flex:none}
.b-page{height:207px;padding-top:20px}
.b-text{height:122px;padding-top:20px}
.b-colors{flex:1}
.field{background:#fff;border:1px solid #c8c8c8;border-radius:4px;display:flex;align-items:center;font-size:13px;color:#333}
.f-select{height:28px;padding:0 7px 2px 6px;width:233px;font-size:13.200px}
.f-select span{margin-left:8px;flex:1}
.ds-ic{width:12px;height:15px;fill:none;stroke:#777;stroke-width:1}
.mini{stroke-width:.8}
.tri{width:8px;height:6px;fill:#777}
.dims{display:flex;margin-top:6px;height:59px}
.dim-col{width:91px;flex:none;display:flex;flex-direction:column;gap:10px}
.f-num{height:25px;padding-left:6px;font-size:14px}
.f-num svg{width:11px;height:11px;fill:none;stroke:#777;stroke-width:1.200}
.f-num span{margin-left:7px}
.dim-lock{width:49px;height:59px;flex:none}
.br{fill:none;stroke:#ccc}
.lk{fill:#666}
.br2{fill:none;stroke:#666;stroke-width:1.500}
.dim-right{width:93px;flex:none}
.orient{display:flex;height:27px}
.o-btn{width:47px;display:flex;align-items:center;justify-content:center}
.o-btn.on{background:#fafafa}
.o-btn svg{width:11px;height:15px;fill:none;stroke:#777;stroke-width:1.100}
.o-btn svg.land{width:16px;height:11px}
.fill-box{margin-top:7px;height:25px;border:1px solid #c8c8c8;border-radius:4px;display:flex;align-items:center;padding-left:5px;background:#f4f4f4}
.fill-box svg{width:15px;height:16px;fill:#777}
.barfill{fill:#bdb6ac}
.fill-swatch{flex:1;margin:1px 1px 1px 4px;align-self:stretch;background:#fff;border:1px solid #ddd;border-radius:2px}
.lnk{display:block;width:max-content;font-size:13px;line-height:15px;color:#0f6fe0;border-bottom:1px dotted #0f6fe0}
.l1{margin-top:8px}
.l2{margin-top:9px}
.l3{margin-top:8px}
.chk{display:flex;align-items:center;font-size:13px;line-height:18px;color:#444;white-space:nowrap}
.cb{width:13px;height:13px;border:1px solid #666;background:#fff;margin-right:4px;flex:none;position:relative}
.c-hide{margin-top:7px;color:#888}
.ck::after{content:"";position:absolute;left:2px;top:1px;width:7px;height:4px;border-left:1px solid #222;border-bottom:1px solid #222;transform:rotate(-45deg)}
.txt-row{display:flex;justify-content:space-between;height:26px;margin-bottom:6px}
.f-font{width:145px}
.f-font .ph{padding-bottom:2px}
.f-none{width:83px}
.f-a{width:112px;padding-left:7px;background:#f4f4f4}
.f-set{width:114px}
.ph{color:#999;flex:1;padding-left:5px}
.drop{width:20px;align-self:stretch;border-left:1px solid #c8c8c8;display:flex;justify-content:center;padding-top:7px;font-weight:400}
.drop svg{width:8px;height:6px;fill:#555}
.none-t{flex:1;font-size:10px;padding-left:5px;color:#333}
.a-l{width:18px;color:#777;font-size:13px}
.a-sw{flex:1;margin:1px 1px 1px 0;align-self:stretch;background:#fff;border:1px solid #ddd;text-align:center;font-size:10px;font-weight:700;line-height:22px;color:#888}
.tt{padding-left:1px;color:#555;font-size:11px;font-weight:700;white-space:nowrap}
.tt small{font-size:8px}
.f-set .ph{padding-left:6px}
.f-set em{font-style:normal;font-size:8.500px;color:#bbb;margin-right:3px}
.h-colors{height:26px}
.ctabs{display:flex;height:40px}
.ctab{padding:13px 6px 0;font-size:13.500px;line-height:16px;color:#888;white-space:nowrap;width:max-content}
.ctab.on{width:97px;color:#0a6fe4;font-weight:500;border-bottom:2px solid #0a6fe4;padding:13px 0 0 6px;font-size:13.700px}
.chk-row{display:flex;margin-top:15px;height:18px}
.c-fills{width:68px}
.c-strokes{width:90px}
.swatches{display:flex;height:21px;margin-top:17px}
.swatches i{display:block;width:21px}
.s1{background:#42a5f5}
.s2{background:#fff;width:41px!important}
.s3{background:#eaeaea}
.s4{background:#e3e3e3}
.s5{background:#bdbdbd;width:20px!important}
.s6{background:#ababab}
.s7{background:#212121}
.s8{background:#000}
.hint{margin:6px 0 0;font-size:13px;line-height:18px;color:#888}

/* Taskbar */
.taskbar{background:#202020;display:flex;align-items:stretch;position:relative}
.start{width:48px;flex:none;background:#1b2020;display:flex;align-items:center;justify-content:center}
.start svg{width:16px;height:16px;fill:#fff}
.tsearch{width:288px;flex:none;background:#f1f1f1;border:1px solid #bcbcbc;display:flex;align-items:center;padding-left:10px;overflow:hidden;position:relative}
.tsearch svg{width:16px;height:16px;fill:none;stroke:#222;stroke-width:1.200}
.tsearch span{margin-left:13px;font:14.500px "Open Sans",sans-serif;color:#333}
.tsearch .light{position:absolute;left:209px;top:1px;width:78px;height:39px;stroke:none}
.taskview{width:51px;flex:none;display:flex;align-items:center;justify-content:center;padding-right:4px}
.taskview svg{width:18px;height:18px;fill:none;stroke:#eee;stroke-width:1.100}
.task-opera{width:50px;flex:none;background:linear-gradient(90deg,#545454 0 44px,#3a3a3a 44px);display:flex;align-items:center;justify-content:center;border-bottom:3px solid #4aa8a8}
.task-opera svg{width:24px;height:25px;fill:none;stroke:#d81e4e;stroke-width:1.800}
.apps{display:flex;gap:9px;margin-left:3px}
.app-t{width:40px;border-bottom:3px solid #4aa8a8;display:flex;align-items:center;justify-content:center;position:relative}
.app-t svg{width:24px;height:24px}
.badge{position:absolute;right:2px;bottom:3px;min-width:15px;height:15px;border-radius:8px;text-align:center;font:700 10px/15px Roboto,sans-serif;color:#fff}
.red{background:#e0454a}
.dark{background:#333;border:1px solid #aaa;font-size:11px;line-height:13px;right:-2px;min-width:20px;height:20px;padding-top:3px}
.ppt-t{font:700 13px Roboto,sans-serif;fill:#fff}
.ps-t{font:700 12px Roboto,sans-serif;fill:#31a8ff}
.tray{position:absolute;left:1157px;top:0;width:443px;height:40px;display:flex;align-items:center;color:#eee}
.weather{width:22px;height:22px}
.temp{margin-left:9px;font:14px "Open Sans",sans-serif;width:39px}
.cond{font:13.200px "Open Sans",sans-serif;width:128px;white-space:nowrap}
.tray-ic{fill:none;stroke:#eee;stroke-width:1.100}
.t-up{width:14px;height:14px;margin-left:1px}
.t-cloud{width:18px;height:12px;margin-left:9px}
.cloud{fill:#ddd;stroke:none}
.t-net{width:16px;height:16px;margin-left:7px}
.t-vol{width:16px;height:16px;margin-left:8px}
.esp{font:11.500px "Open Sans",sans-serif;margin-left:10px;width:26px}
.clock{width:60px;margin-left:4px;text-align:center;font:11.300px/18px "Open Sans",sans-serif}
.notif{position:relative;margin-left:13px;width:24px;height:24px}
.notif svg{width:16px;height:15px;fill:#eee;margin:0 0 0 2px}
.nl{fill:none;stroke:#333;stroke-width:1}
.notif span{position:absolute;left:9px;top:7px;width:16px;height:16px;border-radius:50%;background:#2a2a2a;border:1px solid #888;font:700 11px/14px Roboto,sans-serif;text-align:center;color:#eee}
.showdesk{position:absolute;right:3px;top:0;width:1px;height:40px;background:#666}
```
